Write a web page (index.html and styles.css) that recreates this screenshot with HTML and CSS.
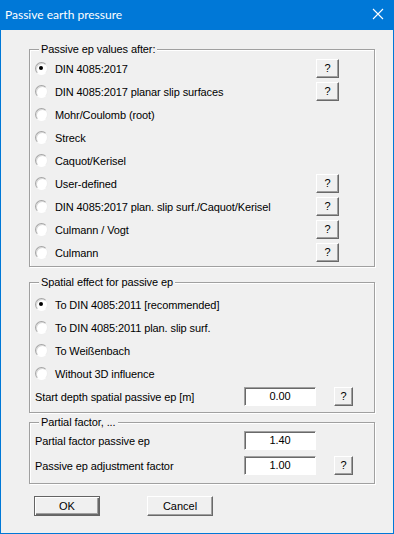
FILE: index.html
```html
<!DOCTYPE html>
<html lang="en">
<head>
  <meta charset="UTF-8" />
  <title>Passive earth pressure</title>
  <link rel="stylesheet" href="styles.css">
</head>
<body>

  <div class="window">
    <header class="title-bar">
      <span class="title-text">Passive earth pressure</span>
      <svg class="close-icon" width="12" height="12" viewBox="0 0 12 12">
        <path d="M1 1 L11 11 M11 1 L1 11" stroke="#fff" stroke-width="1.1" fill="none"/>
      </svg>
    </header>

    <div class="client">

      <!-- passive ep method -->
      <div class="group group-values">
        <span class="legend">Passive ep values after:</span>
        <div class="row"><span class="radio checked"></span><span class="label">DIN 4085:2017</span><button class="help">?</button></div>
        <div class="row"><span class="radio"></span><span class="label">DIN 4085:2017 planar slip surfaces</span><button class="help">?</button></div>
        <div class="row"><span class="radio"></span><span class="label">Mohr/Coulomb (root)</span></div>
        <div class="row"><span class="radio"></span><span class="label">Streck</span></div>
        <div class="row"><span class="radio"></span><span class="label">Caquot/Kerisel</span></div>
        <div class="row"><span class="radio"></span><span class="label">User-defined</span><button class="help">?</button></div>
        <div class="row"><span class="radio"></span><span class="label">DIN 4085:2017 plan. slip surf./Caquot/Kerisel</span><button class="help">?</button></div>
        <div class="row"><span class="radio"></span><span class="label">Culmann / Vogt</span><button class="help">?</button></div>
        <div class="row"><span class="radio"></span><span class="label">Culmann</span><button class="help">?</button></div>
      </div>

      <!-- spatial effect -->
      <div class="group group-spatial">
        <span class="legend">Spatial effect for passive ep</span>
        <div class="row"><span class="radio checked"></span><span class="label">To DIN 4085:2011 [recommended]</span></div>
        <div class="row"><span class="radio"></span><span class="label">To DIN 4085:2011 plan. slip surf.</span></div>
        <div class="row"><span class="radio"></span><span class="label">To Weißenbach</span></div>
        <div class="row"><span class="radio"></span><span class="label">Without 3D influence</span></div>
        <div class="row field-row">
          <span class="label">Start depth spatial passive ep [m]</span>
          <span class="input">0.00</span>
          <button class="help small">?</button>
        </div>
      </div>

      <!-- partial factors -->
      <div class="group group-factors">
        <span class="legend">Partial factor, ...</span>
        <div class="row field-row tall">
          <span class="label">Partial factor passive ep</span>
          <span class="input">1.40</span>
          <span class="help-spacer"></span>
        </div>
        <div class="row field-row tall">
          <span class="label">Passive ep adjustment factor</span>
          <span class="input">1.00</span>
          <button class="help small">?</button>
        </div>
      </div>

      <div class="buttons">
        <button class="btn default">OK</button>
        <button class="btn">Cancel</button>
      </div>

    </div>
  </div>

</body>
</html>
```

FILE: styles.css
```css
* {
  box-sizing: border-box;
  margin: 0;
  padding: 0;
}

body {
  width: 394px;
  height: 534px;
  overflow: hidden;
  font-family: 'Liberation Sans', Arial, sans-serif;
  font-size: 11px;
  letter-spacing: -0.1px;
  color: #000;
  background-color: #f0f0f0;
}

.window {
  width: 394px;
  height: 534px;
  border: 1px solid #0078d7;
  border-top: none;
  background-color: #f0f0f0;
  display: flex;
  flex-direction: column;
}

/* TITLE BAR */
.title-bar {
  height: 30px;
  margin: 0 -1px;
  background-color: #0078d7;
  color: #fff;
  display: flex;
  align-items: center;
  justify-content: space-between;
  padding: 0 10px 2px 5px;
}

.title-text {
  font-family: 'Lato', 'Noto Sans', sans-serif;
  font-size: 12px;
  letter-spacing: 0;
}

.close-icon {
  display: block;
}

/* CLIENT AREA */
.client {
  padding: 19px 0 0 28px;
  display: flex;
  flex-direction: column;
}

.group {
  position: relative;
  width: 346px;
  border: 1px solid #a0a0a0;
  box-shadow: 1px 1px 0 #fff, inset 1px 1px 0 #fff;
}

.legend {
  position: absolute;
  top: -7px;
  left: 9px;
  padding: 0 2px;
  line-height: 13px;
  background-color: #f0f0f0;
}

.group-values {
  height: 218px;
  padding: 7px 35px 0 5px;
}

.group-spatial {
  height: 131px;
  margin-top: 15px;
  padding: 10px 21px 0 5px;
}

.group-factors {
  height: 62px;
  margin-top: 9px;
  padding: 5px 21px 0 5px;
}

.row {
  height: 23px;
  display: flex;
  align-items: center;
}

.row.tall {
  height: 25px;
}

.label {
  flex: 1;
  white-space: nowrap;
}

/* RADIO BUTTONS */
.radio {
  position: relative;
  width: 13px;
  height: 13px;
  margin-right: 7px;
  border-radius: 50%;
  background-color: #fff;
  border: 1px solid;
  border-color: #a6a6a6 #ececec #fff #a6a6a6;
  box-shadow: inset 1px 1px 0 #dadada;
}

.radio.checked::after {
  content: '';
  position: absolute;
  top: 3px;
  left: 3px;
  width: 4px;
  height: 4px;
  border-radius: 50%;
  background-color: #000;
}

/* BUTTONS */
.help {
  width: 23px;
  height: 19px;
  font-family: 'Liberation Sans', Arial, sans-serif;
  font-size: 11px;
  line-height: 15px;
  color: #000;
  background-color: #f0f0f0;
  border: 1px solid;
  border-color: #fff #696969 #696969 #fff;
  box-shadow: inset -1px -1px 0 #a0a0a0;
}

.help.small {
  width: 19px;
}

.help-spacer {
  width: 19px;
}

.input {
  width: 72px;
  height: 19px;
  margin-right: 18px;
  line-height: 17px;
  text-align: center;
  background-color: #fff;
  border: 1px solid;
  border-color: #a0a0a0 #fff #fff #a0a0a0;
  box-shadow: inset 1px 1px 0 #696969;
}

.buttons {
  display: flex;
  gap: 47px;
  margin-top: 12px;
  padding-left: 5px;
}

.btn {
  width: 66px;
  height: 20px;
  font-family: 'Liberation Sans', Arial, sans-serif;
  font-size: 11px;
  color: #000;
  background-color: #f0f0f0;
  border: 1px solid;
  border-color: #fff #696969 #696969 #fff;
  box-shadow: inset -1px -1px 0 #a0a0a0;
}

.btn.default {
  border: 1px solid #646464;
  box-shadow: inset 1px 1px 0 #fff, inset -1px -1px 0 #696969, inset -2px -2px 0 #a0a0a0;
}
```
